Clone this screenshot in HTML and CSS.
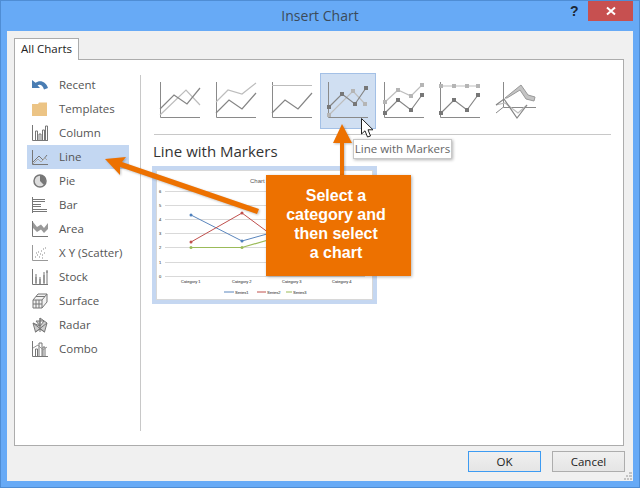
FILE: index.html
```html
<!DOCTYPE html>
<html lang="en">
<head>
<meta charset="utf-8">
<title>Insert Chart</title>
<link rel="stylesheet" href="styles.css">
</head>
<body>
<div class="window">
  <header class="titlebar">
    <div class="title">Insert Chart</div>
    <div class="help">?</div>
    <div class="close"><svg width="10" height="10" viewBox="0 0 10 10"><path d="M1 1.500 9 8.500M9 1.500 1 8.500" stroke="#fff" stroke-width="2"/></svg></div>
  </header>
  <div class="client">
    <div class="tabs"><div class="tab">All Charts</div></div>
    <div class="panel">
      <nav class="sidebar">
        <div class="row"><svg class="ico" viewBox="0 0 16 16"><path d="M0 3v8h8L5.500 8.300C7.500 7 10.500 7.500 12 12.500L16 11C14 4 7.500 2.500 3.500 5.800Z" fill="#4a7db3"/></svg><span>Recent</span></div>
        <div class="row"><svg class="ico" viewBox="0 0 16 16"><path d="M0 3h6l1-1.500h8V15H0Z" fill="#ecc485"/></svg><span>Templates</span></div>
        <div class="row"><svg class="ico" viewBox="0 0 16 16"><path d="M.5 0v15.500H16M3.500 15V6h2v9M7 15V9h2v6M10.500 15V5h2v10M13.500 15V1h2v14" fill="none" stroke="#777"/></svg><span>Column</span></div>
        <div class="row selected"><svg class="ico" viewBox="0 0 16 16"><path d="M.5 1v14.500H16" fill="none" stroke="#777"/><path d="M1 13 7 7l4 4 4-5" fill="none" stroke="#777"/><path d="M1 15 6 10l3 3 4-4 2 2" fill="none" stroke="#aaa"/></svg><span>Line</span></div>
        <div class="row"><svg class="ico" viewBox="0 0 16 16"><circle cx="8" cy="8" r="6" fill="#ddd" stroke="#777" stroke-width="1.500"/><path d="M8 2a6 6 0 0 1 4 10L8 8Z" fill="#777"/></svg><span>Pie</span></div>
        <div class="row"><svg class="ico" viewBox="0 0 16 16"><path d="M.5 0v16M1 2.500h12M1 4.500h12M1 7.500h8M1 9.500h8M1 12.500h14M1 14.500h14" fill="none" stroke="#777"/></svg><span>Bar</span></div>
        <div class="row"><svg class="ico" viewBox="0 0 16 16"><path d="M.5 0v15.500H16" fill="none" stroke="#777"/><path d="M1 1 5 6 9 3.500 12 7 16 2V8L12 12 9 8.500 5 11 1 7Z" fill="#999"/></svg><span>Area</span></div>
        <div class="row"><svg class="ico" viewBox="0 0 16 16"><path d="M.5 0v15.500H16" fill="none" stroke="#999"/><path d="M3 12h1M5 10h1M7 12h1M6 7h1M8 9h1M10 10h1M9 6h1M11 4h1M12 8h1M13 3h1M4 8h1M10 13h1" stroke="#888" stroke-width="1.200"/></svg><span>X Y (Scatter)</span></div>
        <div class="row"><svg class="ico" viewBox="0 0 16 16"><path d="M.5 0v15.500H16M4 5v10M8 8v7M12 3v12M15 1v14" fill="none" stroke="#777"/><path d="M3 8h2v6H3ZM7 10h2v5H7ZM11 6h2v8h-2Z" fill="#999"/><path d="M14 3h2" stroke="#777"/></svg><span>Stock</span></div>
        <div class="row"><svg class="ico" viewBox="0 0 16 16"><path d="M1 7 6 1h9v8l-5 6H1Z M1 7h9v8M10 7l5-6M4 7v8M7 7v8M1 11h9M4 3.500h9" fill="#f2f2f2" stroke="#777"/></svg><span>Surface</span></div>
        <div class="row"><svg class="ico" viewBox="0 0 16 16"><path d="M8 1 15 6 12.500 15 8 12 3.500 15 1 6 8 9Z M8 1v14M1 6 12.500 15M15 6 3.500 15M4 4 12 4M4 4 8 9 12 4" fill="#ccc" stroke="#777"/></svg><span>Radar</span></div>
        <div class="row"><svg class="ico" viewBox="0 0 16 16"><path d="M.5 0v15.500H16M3.500 15V8h2v7M7 15V2h3v13M11 15V6h2v9" fill="none" stroke="#777"/><path d="M1 7 6 4l5 5 4-3" fill="none" stroke="#999"/></svg><span>Combo</span></div>
      </nav>
      <main class="main">
        <div class="thumbs">
          <div class="thumb"><svg width="40" height="36" viewBox="0 0 40 36"><path d="M.5 0v35.500H40" class="ax"/><path d="M0 33 26 8 40 23" class="lt"/><path d="M0 27 14 13 27 22 40 6" class="dk"/></svg></div>
          <div class="thumb"><svg width="40" height="36" viewBox="0 0 40 36"><path d="M.5 0v35.500H40" class="ax"/><path d="M0 20 12 8 26 12 40 1" class="lt"/><path d="M0 31 13 18 26 27 40 11" class="dk"/></svg></div>
          <div class="thumb"><svg width="40" height="36" viewBox="0 0 40 36"><path d="M.5 0v35.500H40" class="ax"/><path d="M0 3.500H40" class="lt"/><path d="M0 31 13 18 26 27 40 11" class="dk"/></svg></div>
          <div class="thumb active"><svg width="40" height="36" viewBox="0 0 40 36"><path d="M.5 0v35.500H40" class="ax"/><path d="M1 33 25 9 37 22" class="lt"/><path d="M1 25 14 12 27 22 38 6" class="dk"/><path d="M-1 31h4v4h-4ZM23 7h4v4h-4ZM35 20h4v4h-4Z" class="ml"/><path d="M-1 23h4v4h-4ZM12 10h4v4h-4ZM25 20h4v4h-4ZM36 4h4v4h-4Z" class="md"/></svg></div>
          <div class="thumb"><svg width="40" height="36" viewBox="0 0 40 36"><path d="M.5 0v35.500H40" class="ax"/><path d="M1 20 14 8 27 14 38 3" class="lt"/><path d="M1 31 14 18 27 28 38 13" class="dk"/><path d="M-1 18h4v4h-4ZM12 6h4v4h-4ZM25 12h4v4h-4ZM36 1h4v4h-4Z" class="ml"/><path d="M-1 29h4v4h-4ZM12 16h4v4h-4ZM25 26h4v4h-4ZM36 11h4v4h-4Z" class="md"/></svg></div>
          <div class="thumb"><svg width="40" height="36" viewBox="0 0 40 36"><path d="M.5 0v35.500H40" class="ax"/><path d="M1 4H38" class="lt"/><path d="M1 31 14 18 27 28 38 13" class="dk"/><path d="M-1 2h4v4h-4ZM12 2h4v4h-4ZM25 2h4v4h-4ZM36 2h4v4h-4Z" class="ml"/><path d="M-1 29h4v4h-4ZM12 16h4v4h-4ZM25 26h4v4h-4ZM36 11h4v4h-4Z" class="md"/></svg></div>
          <div class="thumb"><svg width="40" height="36" viewBox="0 0 40 36"><path d="M7.500 0v25.500H40M0 31 7.500 25" class="ax"/><path d="M9 16 25 3 32 13 39 15 38 19 30 17 24 8 11 16Z" fill="#c4c4c4" stroke="#999"/><path d="M0 23 9 21 22 31 31 23" class="lt"/><path d="M0 23 8 17 21 36 31 23" class="dk"/></svg></div>
        </div>
        <hr class="rule">
        <h2 class="subtitle">Line with Markers</h2>
        <div class="preview">
          <svg width="215" height="130" viewBox="157 170 215 130">
            <g stroke="#d9d9d9"><path d="M165 190.500H365M165 204.500H365M165 218.500H365M165 232.500H365M165 246.500H365M165 261.500H365M165 275.500H365"/></g>
            <g class="tiny"><text x="159" y="192">6</text><text x="159" y="206">5</text><text x="159" y="220">4</text><text x="159" y="234">3</text><text x="159" y="248">2</text><text x="159" y="263">1</text><text x="159" y="277">0</text>
            <text x="181" y="282">Category 1</text><text x="232" y="282">Category 2</text><text x="282" y="282">Category 3</text><text x="332" y="282">Category 4</text>
            <text x="235" y="292.500">Series1</text><text x="267" y="292.500">Series2</text><text x="293" y="292.500">Series3</text></g>
            <text x="250" y="182" class="ctitle">Chart Title</text>
            <path d="M191 214 242 240 292 226 342 211" fill="none" stroke="#5b86bd"/>
            <path d="M191 241 242 212 292 249 342 235" fill="none" stroke="#c0504d"/>
            <path d="M191 246.500 242 246.500 292 232 342 204" fill="none" stroke="#9bbb59" stroke-width="1.200"/>
            <path d="M224 291h10" stroke="#5b86bd"/><path d="M257 291h9" stroke="#c0504d"/><path d="M286 291h6" stroke="#9bbb59"/>
            <circle cx="191" cy="214" r="1.500" fill="#4f81bd"/><circle cx="242" cy="240" r="1.500" fill="#4f81bd"/><circle cx="191" cy="241" r="1.500" fill="#c0504d"/><circle cx="242" cy="212" r="1.500" fill="#c0504d"/><circle cx="191" cy="246.500" r="1.500" fill="#9bbb59"/><circle cx="242" cy="246.500" r="1.500" fill="#9bbb59"/>
          </svg>
        </div>
      </main>
    </div>
    <footer class="buttons">
      <button class="btn primary" type="button">OK</button>
      <button class="btn" type="button">Cancel</button>
    </footer>
    <svg class="grip" width="8" height="8" viewBox="0 0 8 8"><path d="M5 0h3v2H5ZM2 3h2v2H2ZM5 3h3v2H5ZM0 6h2v2H0ZM3 6h2v2H3ZM6 6h2v2H6Z" fill="#c4c4c4"/></svg>
  </div>

  <svg class="arrows" width="640" height="488" viewBox="0 0 640 488">
    <g fill="#ed7100">
      <path d="M105 159 126 157 122 162 259 209 257 214 120 167 120 175Z"/>
      <path d="M342 124 352 143 344 143V176H340V143H333Z"/>
    </g>
  </svg>
  <div class="tooltip">Line with Markers</div>
  <svg class="cursor" width="14" height="22" viewBox="0 0 14 22"><path d="M.5.500V16L4 12.800 6.500 19 9.500 18 7 11.800H12Z" fill="#fff" stroke="#222"/></svg>
  <div class="callout">Select a<br>category and<br>then select<br>a chart</div>
</div>
</body>
</html>
```

FILE: styles.css
```css
* { box-sizing: border-box; }
html, body { margin: 0; padding: 0; }
body { width: 640px; height: 488px; overflow: hidden; font-family: "Open Sans", "Noto Sans", sans-serif; }

.window {
  position: relative;
  width: 640px;
  height: 488px;
  display: flex;
  flex-direction: column;
  background: #67aaf6;
  box-shadow: inset 0 0 0 1px #4f8dd4;
}
.titlebar { height: 31px; position: relative; flex: none; display: flex; justify-content: center; }
.title { font-size: 14px; line-height: 31px; color: #3b4a5a; }
.help { position: absolute; left: 570px; top: 1px; font: bold 14px/20px "Liberation Sans", sans-serif; color: #1d2733; }
.close {
  position: absolute; left: 588px; top: 1px; width: 45px; height: 20px;
  background: #c75050; display: flex; align-items: center; justify-content: center;
}
.client {
  position: relative;
  flex: 1;
  margin: 0 7px 7px;
  padding: 7px 9px 0 7px;
  background: #f0f0f0;
  display: flex;
  flex-direction: column;
}
.tabs { display: flex; height: 22px; flex: none; margin-bottom: -1px; position: relative; z-index: 1; }
.tab {
  width: 65px; height: 22px; background: #fff;
  border: 1px solid #acacac; border-bottom: 0;
  font-size: 11.500px; line-height: 19px; color: #222; text-align: center;
}
.panel {
  height: 387px; flex: none; background: #fff; border: 1px solid #acacac;
  display: flex;
}
.sidebar { width: 125px; flex: none; padding: 13px 0 0 12px; }
.row {
  width: 102px; height: 24px; padding-left: 5px;
  display: flex; align-items: center; gap: 11px;
  font-size: 11.500px; color: #555;
}
.row span { margin-bottom: 2px; }
.row.selected { background: #c3d7f2; }
.ico { width: 16px; height: 16px; flex: none; }

.main { flex: 1; margin: 15px 0 14px; border-left: 1px solid #c8c8c8; padding-left: 11px; }
.thumbs { display: flex; margin-top: -2px; }
.thumb { width: 56px; height: 56px; padding: 9px 0 0 8px; border: 1px solid transparent; }
.thumb svg { display: block; margin: -1px 0 0 -1px; overflow: visible; }
.thumb.active { background: #d0dff2; border-color: #a3c0e6; }
.ax { fill: none; stroke: #8a8a8a; }
.dk { fill: none; stroke: #858585; stroke-width: 1.200; }
.lt { fill: none; stroke: #bdbdbd; stroke-width: 1.200; }
.md { fill: #777; }
.ml { fill: #b5b5b5; }

.rule { width: 457px; height: 1px; margin: 5px 0 0 2px; border: 0; background: #c8c8c8; }
.subtitle { margin: 6px 0 0 1px; font-size: 15px; line-height: 20px; font-weight: 400; color: #333; }
.preview {
  width: 225px; height: 138px; margin-top: 5px;
  border: 4px solid #c5d7f1; background: #fff; padding: 0;
  box-shadow: inset 0 0 0 1px #d8d8d8;
}
.preview svg { display: block; margin: 1px; }
.tiny { font: 4px "Liberation Sans", sans-serif; fill: #444; stroke: #777; stroke-width: .1px; }
.ctitle { font: 6px "Liberation Sans", sans-serif; fill: #555; }

.buttons { display: flex; justify-content: flex-end; gap: 11px; padding-top: 5px; margin-right: -1px; }
.btn {
  width: 73px; height: 21px; padding: 0;
  border: 1px solid #adadad; background: linear-gradient(#f0f0f0, #e5e5e5);
  font: 11.500px "Open Sans", "Noto Sans", sans-serif; color: #222;
}
.btn.primary { border-color: #3d9bf2; }
.grip { position: absolute; right: 1px; bottom: 1px; }

.arrows { position: absolute; left: 0; top: 0; filter: drop-shadow(1px 1px 1px rgba(0,0,0,.25)); }
.tooltip {
  position: absolute; left: 353px; top: 139px; width: 99px; height: 20px;
  background: #fff; border: 1px solid #c8c8c8; box-shadow: 1px 1px 3px rgba(0,0,0,.3);
  font-size: 11.500px; line-height: 18px; color: #666; text-align: center; white-space: nowrap;
}
.cursor { position: absolute; left: 361px; top: 118px; }
.callout {
  position: absolute; left: 266px; top: 175px; width: 145px; height: 101px;
  padding: 11px 5px 0 0;
  background: #ed7100; box-shadow: 1px 1px 3px rgba(0,0,0,.3);
  font: bold 16px/19px "Liberation Sans", Arial, sans-serif; color: #fff; text-align: center;
}
```
